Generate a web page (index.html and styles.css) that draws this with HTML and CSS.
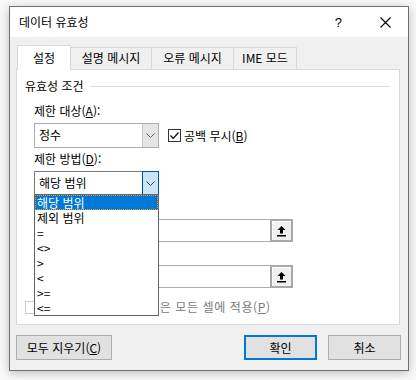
FILE: index.html
```html
<!DOCTYPE html>
<html lang="ko">
<head>
    <meta charset="UTF-8">
    <title>데이터 유효성</title>
    <link rel="stylesheet" href="styles.css">
</head>
<body>
    <div class="window">
        <div class="titlebar">
            <span class="title">데이터 유효성</span>
            <span class="help">?</span>
            <svg class="close" width="11" height="11" viewBox="0 0 11 11">
                <path d="M0.5 0.5 L10.5 10.5 M10.5 0.5 L0.5 10.5" stroke="#000" stroke-width="1.1" fill="none"/>
            </svg>
        </div>
        <div class="client">
            <div class="tabs">
                <div class="tab active">설정</div>
                <div class="tab w81">설명 메시지</div>
                <div class="tab w82">오류 메시지</div>
                <div class="tab w63">IME 모드</div>
            </div>
            <div class="panel">
                <div class="group-title">유효성 조건</div>
                <div class="group">
                    <div class="label first">제한 대상(<u>A</u>):</div>
                    <div class="row">
                        <div class="combo">
                            <span class="combo-text">정수</span>
                            <span class="combo-btn">
                                <svg width="9" height="5" viewBox="0 0 9 5"><path d="M0.5 0.5 L4.5 4.5 L8.5 0.5" stroke="#606060" fill="none"/></svg>
                            </span>
                        </div>
                        <label class="check">
                            <span class="box">
                                <svg width="11" height="11" viewBox="0 0 11 11"><path d="M1.5 5.5 L4.2 8.3 L9.5 2.5" stroke="#000" stroke-width="1.2" fill="none"/></svg>
                            </span>
                            공백 무시(<u>B</u>)
                        </label>
                    </div>
                    <div class="label">제한 방법(<u>D</u>):</div>
                    <div class="combo focused">
                        <span class="combo-text">해당 범위</span>
                        <span class="combo-btn">
                            <svg width="9" height="5" viewBox="0 0 9 5"><path d="M0.5 0.5 L4.5 4.5 L8.5 0.5" stroke="#404040" fill="none"/></svg>
                        </span>
                    </div>
                    <div class="label hidden-label">최소값(<u>M</u>):</div>
                    <div class="field">
                        <span class="field-input"></span>
                        <span class="ref-btn">
                            <svg width="11" height="12" viewBox="0 0 11 12"><path d="M5.5 1 L1.5 5 H4 V8.5 H7 V5 H9.5 Z" fill="#000"/><rect x="1" y="10" width="9" height="1.5" fill="#000"/></svg>
                        </span>
                    </div>
                    <div class="label hidden-label">최대값(<u>X</u>):</div>
                    <div class="field">
                        <span class="field-input"></span>
                        <span class="ref-btn">
                            <svg width="11" height="12" viewBox="0 0 11 12"><path d="M5.5 1 L1.5 5 H4 V8.5 H7 V5 H9.5 Z" fill="#000"/><rect x="1" y="10" width="9" height="1.5" fill="#000"/></svg>
                        </span>
                    </div>
                </div>
                <label class="check disabled">
                    <span class="box"></span>
                    <span class="apply-text"><span class="covered">변경 내용을 설정이 </span>같은 모든 셀에 적용(<u>P</u>)</span>
                </label>

                <ul class="dropdown">
                    <li class="selected">해당 범위</li>
                    <li>제외 범위</li>
                    <li>=</li>
                    <li>&lt;&gt;</li>
                    <li>&gt;</li>
                    <li>&lt;</li>
                    <li>&gt;=</li>
                    <li>&lt;=</li>
                </ul>
            </div>
            <div class="buttons">
                <button class="btn clear">모두 지우기(<u>C</u>)</button>
                <span class="spacer"></span>
                <button class="btn default">확인</button>
                <button class="btn">취소</button>
            </div>
        </div>
    </div>
</body>
</html>
```

FILE: styles.css
```css
* {
    box-sizing: border-box;
    margin: 0;
    padding: 0;
}

body {
    font-family: 'Noto Sans CJK KR', 'Noto Sans', sans-serif;
    font-size: 12px;
    color: #000;
    background: #fafafa;
    width: 416px;
    height: 380px;
    overflow: hidden;
}

u {
    text-decoration: underline;
    text-underline-offset: 1px;
}

.window {
    margin: 6px 0 0 9px;
    width: 400px;
    height: 365px;
    border: 1px solid #6f6f6f;
    background: #f0f0f0;
    box-shadow: 0 2px 10px rgba(0, 0, 0, 0.25);
}

.titlebar {
    height: 30px;
    background: #fff;
    display: flex;
    align-items: center;
    padding-left: 9px;
}

.title {
    flex: 1;
    font-size: 12px;
    line-height: 16px;
}

.help {
    font-family: 'Liberation Sans', sans-serif;
    font-size: 13px;
    margin-right: 38px;
}

.close {
    margin-right: 17px;
}

.client {
    padding: 8px 7px 0 6px;
}

.tabs {
    display: flex;
    align-items: flex-end;
    height: 24px;
    padding-left: 1px;
}

.tab {
    height: 22px;
    line-height: 20px;
    text-align: center;
    border: 1px solid #d9d9d9;
    border-bottom: none;
    border-left: none;
    background: #f0f0f0;
}

.tab.active {
    width: 54px;
    height: 25px;
    line-height: 23px;
    background: #fff;
    border-left: 1px solid #d9d9d9;
    position: relative;
    z-index: 1;
    margin-bottom: -1px;
}

.w81 { width: 81px; }
.w82 { width: 82px; }
.w63 { width: 63px; }

.panel {
    position: relative;
    width: 384px;
    height: 256px;
    background: #fff;
    border: 1px solid #d9d9d9;
    padding: 8px 0 0 8px;
}

.group-title {
    display: flex;
    align-items: center;
    line-height: 16px;
    height: 16px;
}

.group-title::after {
    content: "";
    flex: 1;
    height: 1px;
    background: #dcdcdc;
    margin: 1px 9px 0 6px;
}

.group {
    padding-left: 9px;
}

.label {
    line-height: 16px;
    height: 16px;
    margin-top: 3px;
    margin-bottom: 4px;
}

.label.first {
    margin-top: 9px;
}

.hidden-label {
    visibility: hidden;
    margin-top: 3px;
    margin-bottom: 4px;
}

.row {
    display: flex;
    align-items: center;
}

.combo {
    display: flex;
    width: 125px;
    height: 25px;
    border: 1px solid #adadad;
    background: #fff;
}

.combo-text {
    flex: 1;
    line-height: 22px;
    padding-left: 4px;
}

.combo-btn {
    width: 16px;
    background: #e5e5e5;
    border-left: 1px solid #c8c8c8;
    display: flex;
    align-items: center;
    justify-content: center;
}

.combo.focused {
    border-color: #7a7a7a;
}

.combo.focused .combo-btn {
    background: #cce4f7;
    border: 1px solid #005499;
    margin: -1px -1px -1px 0;
    width: 17px;
}

.check {
    display: flex;
    align-items: center;
    line-height: 16px;
    margin-left: 9px;
}

.box {
    width: 13px;
    height: 13px;
    border: 1px solid #333;
    margin-right: 3px;
    display: flex;
    align-items: center;
    justify-content: center;
    background: #fff;
}

.check.disabled {
    margin: 11px 0 0 0;
    color: #7a7a7a;
}

.check.disabled .box {
    border-color: #cccccc;
    margin-right: 5px;
}

.apply-text {
    letter-spacing: 0.6px;
}

.covered {
    visibility: hidden;
}

.field {
    display: flex;
    width: 259px;
    height: 23px;
}

.field-input {
    flex: 1;
    border: 1px solid #adadad;
    border-right: none;
}

.ref-btn {
    width: 23px;
    border: 2px solid #a8a8a8;
    background: #f0f0f0;
    box-shadow: inset 1px 1px 0 #fff;
    display: flex;
    align-items: center;
    justify-content: center;
}

.dropdown {
    position: absolute;
    left: 17px;
    top: 124px;
    width: 125px;
    height: 122px;
    border: 1px solid #646464;
    background: #fff;
    list-style: none;
    z-index: 2;
}

.dropdown li {
    height: 15px;
    line-height: 15px;
    padding-left: 2px;
}

.dropdown li.selected {
    background: #0078d7;
    color: #fff;
    outline: 1px dotted #f0a030;
    outline-offset: -1px;
}

.buttons {
    display: flex;
    margin-top: 10px;
}

.spacer {
    flex: 1;
}

.btn {
    font-family: inherit;
    font-size: 12px;
    color: #000;
    height: 25px;
    width: 73px;
    background: #e1e1e1;
    border: 1px solid #adadad;
    margin-left: 11px;
}

.btn.clear {
    width: 96px;
    margin-left: 0;
}

.btn.default {
    border: 2px solid #0078d7;
}
```
